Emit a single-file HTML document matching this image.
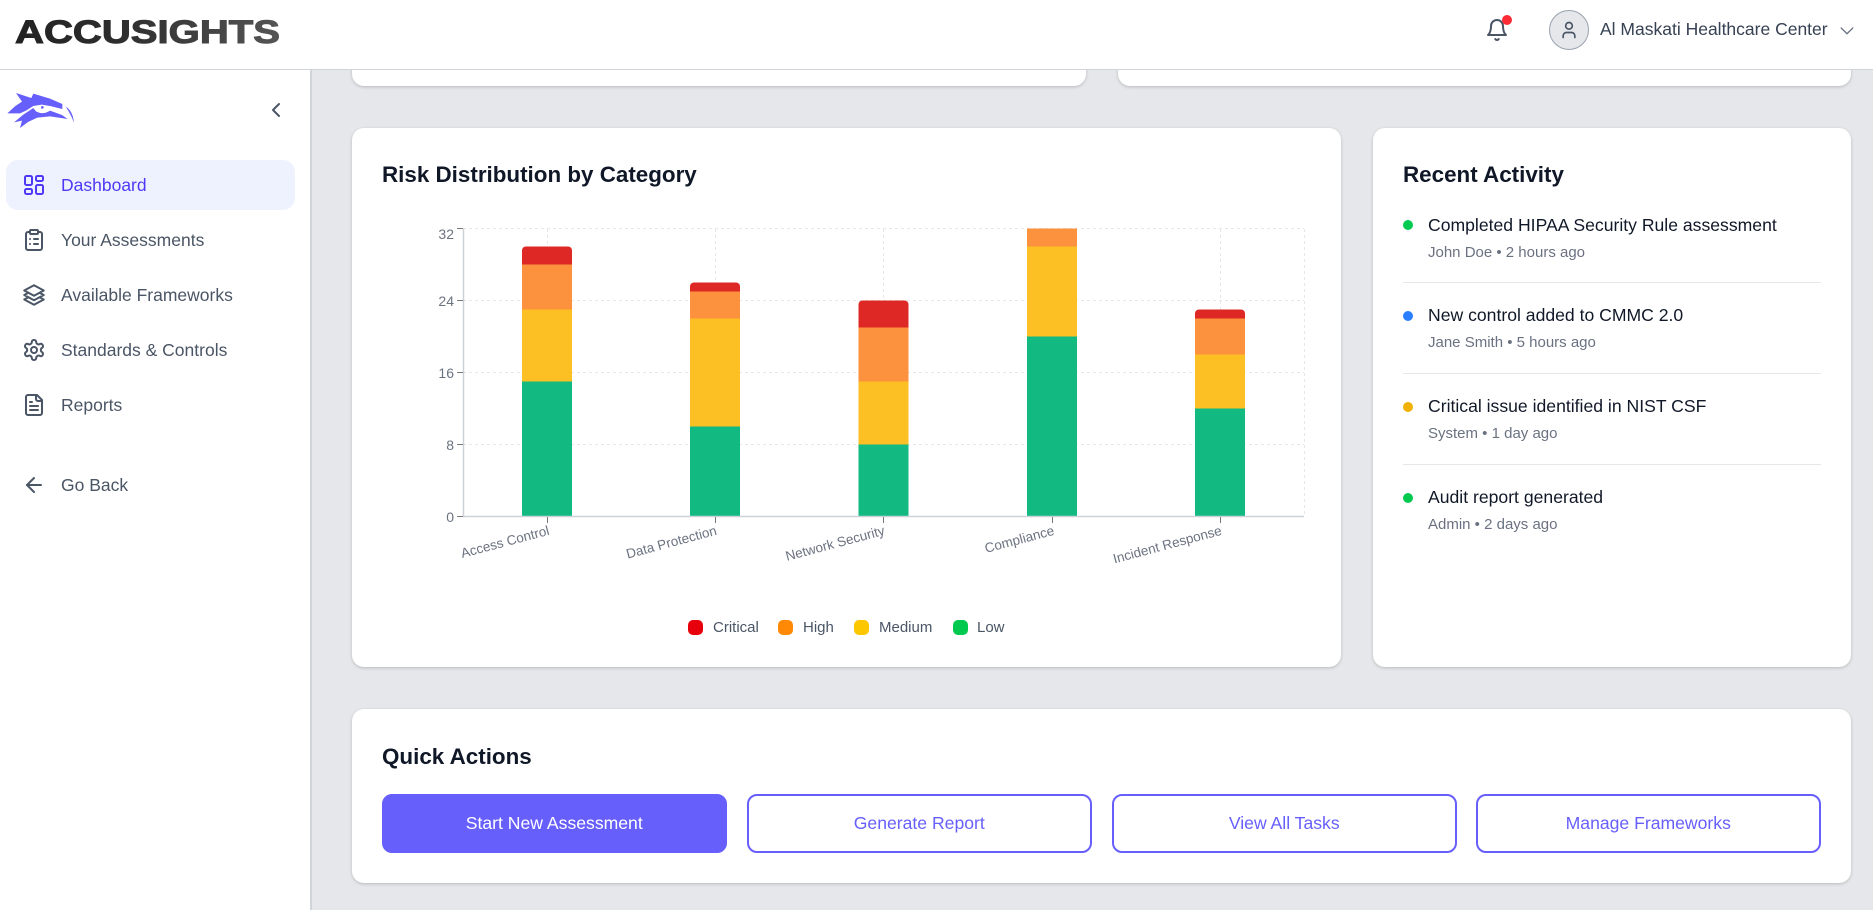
<!DOCTYPE html>
<html lang="en">
<head>
<meta charset="utf-8">
<title>AccuSights Dashboard</title>
<style>
html,body{margin:0;padding:0;width:1873px;height:910px;overflow:hidden;background:#e5e7eb;font-family:"Liberation Sans",Arial,sans-serif}
*{box-sizing:border-box}
.abs,.t{position:absolute}
.t{white-space:nowrap}
.card{position:absolute;background:#fff;border-radius:12px;box-shadow:0 1px 3px rgba(0,0,0,.2)}
.nav{position:absolute;left:61px;font-size:17.500px;line-height:24px;color:#4a5565;white-space:nowrap}
.ic{position:absolute;left:21.5px;width:24px;height:24px;fill:none;stroke:#4a5565;stroke-width:2;stroke-linecap:round;stroke-linejoin:round}
h3{position:absolute;margin:0;font-size:22.4px;line-height:28px;font-weight:700;color:#101828;white-space:nowrap}
.dot{position:absolute;left:1403px;width:10px;height:10px;border-radius:50%}
.a1{position:absolute;left:1428px;font-size:17.6px;line-height:24px;color:#101828;white-space:nowrap}
.a2{position:absolute;left:1428px;font-size:15px;line-height:20px;color:#6a7282;white-space:nowrap}
.hr{position:absolute;left:1403px;width:418px;height:1px;background:#e5e7eb}
.btn{position:absolute;top:794px;width:344.5px;height:59px;border-radius:10px;border:2px solid #675ffb;color:#675ffb;font-size:17.6px;line-height:55px;text-align:center;background:#fff;white-space:nowrap}
.btn.p{background:#675ffb;color:#fff}
.leg{position:absolute;top:620px;width:15px;height:15px;border-radius:5px}
.lt{position:absolute;top:618px;font-size:15px;line-height:20px;color:#4a5565;white-space:nowrap}
</style>
</head>
<body>

<!-- Main cards -->
<div class="card" style="left:352px;top:40px;width:734px;height:46px"></div>
<div class="card" style="left:1118px;top:40px;width:733px;height:46px"></div>
<div class="card" style="left:352px;top:128px;width:989px;height:539px"></div>
<div class="card" style="left:1373px;top:128px;width:478px;height:539px"></div>
<div class="card" style="left:352px;top:709px;width:1499px;height:174px"></div>

<!-- Chart -->
<svg class="abs" style="left:0;top:0" width="1873" height="910" viewBox="0 0 1873 910">
  <g stroke="#e5e7eb" stroke-width="1" stroke-dasharray="3 3" fill="none" shape-rendering="crispEdges">
    <path d="M463 228.500H1304M463 300.500H1304M463 372.500H1304M463 444.500H1304"/>
    <path d="M547.500 229V516M715.500 229V516M883.500 229V516M1052.500 229V516M1220.500 229V516M1304.500 229V516"/>
  </g>
  <g transform="translate(0,-0.500)">
  <!-- Access Control -->
  <rect x="522" y="382" width="50" height="135" fill="#12ba81"/>
  <rect x="522" y="310" width="50" height="72" fill="#fcbf24"/>
  <rect x="522" y="265" width="50" height="45" fill="#fd923e"/>
  <path d="M522 265V251a4 4 0 0 1 4-4h42a4 4 0 0 1 4 4v14Z" fill="#dd2825"/>
  <!-- Data Protection -->
  <rect x="690" y="427" width="50" height="90" fill="#12ba81"/>
  <rect x="690" y="319" width="50" height="108" fill="#fcbf24"/>
  <rect x="690" y="292" width="50" height="27" fill="#fd923e"/>
  <path d="M690 292V287a4 4 0 0 1 4-4h42a4 4 0 0 1 4 4v5Z" fill="#dd2825"/>
  <!-- Network Security -->
  <rect x="858.500" y="445" width="50" height="72" fill="#12ba81"/>
  <rect x="858.500" y="382" width="50" height="63" fill="#fcbf24"/>
  <rect x="858.500" y="328" width="50" height="54" fill="#fd923e"/>
  <path d="M858.500 328V305a4 4 0 0 1 4-4h42a4 4 0 0 1 4 4v23Z" fill="#dd2825"/>
  <!-- Compliance -->
  <rect x="1027" y="337" width="50" height="180" fill="#12ba81"/>
  <rect x="1027" y="247" width="50" height="90" fill="#fcbf24"/>
  <rect x="1027" y="229" width="50" height="18" fill="#fd923e"/>
  <!-- Incident Response -->
  <rect x="1195" y="409" width="50" height="108" fill="#12ba81"/>
  <rect x="1195" y="355" width="50" height="54" fill="#fcbf24"/>
  <rect x="1195" y="319" width="50" height="36" fill="#fd923e"/>
  <path d="M1195 319V314a4 4 0 0 1 4-4h42a4 4 0 0 1 4 4v5Z" fill="#dd2825"/>
  </g>

  <!-- Axes -->
  <path d="M463.500 229V516.500H1304" fill="none" stroke="#ccd1d9" stroke-width="1.500"/>
  <g shape-rendering="crispEdges">
    <path d="M457 228.500H463M457 300.500H463M457 372.500H463M457 444.500H463M457 516.500H463" stroke="#777" stroke-width="1"/>
    <path d="M547.500 517V523M715.500 517V523M883.500 517V523M1052.500 517V523M1220.500 517V523" stroke="#777" stroke-width="1"/>
  </g>
  <g font-family="'Liberation Sans',Arial,sans-serif" font-size="14" fill="#6b7280">
    <text x="454" y="239" text-anchor="end">32</text>
    <text x="454" y="306" text-anchor="end">24</text>
    <text x="454" y="378" text-anchor="end">16</text>
    <text x="454" y="450" text-anchor="end">8</text>
    <text x="454" y="522" text-anchor="end">0</text>
  </g>
  <g font-family="'Liberation Sans',Arial,sans-serif" font-size="13.500" fill="#6b7280">
    <text transform="translate(550 534.500) rotate(-15)" text-anchor="end">Access Control</text>
    <text transform="translate(717.500 534.500) rotate(-15)" text-anchor="end">Data Protection</text>
    <text transform="translate(885.500 534.500) rotate(-15)" text-anchor="end">Network Security</text>
    <text transform="translate(1055 534.500) rotate(-15)" text-anchor="end">Compliance</text>
    <text transform="translate(1222.500 534.500) rotate(-15)" text-anchor="end">Incident Response</text>
  </g>
</svg>

<h3 style="left:382px;top:161px">Risk Distribution by Category</h3>
<div class="leg" style="left:688px;background:#e7000b"></div><div class="lt" style="left:713px">Critical</div>
<div class="leg" style="left:778px;background:#ff8904"></div><div class="lt" style="left:803px">High</div>
<div class="leg" style="left:854px;background:#fdc700"></div><div class="lt" style="left:879px">Medium</div>
<div class="leg" style="left:953px;background:#00c950"></div><div class="lt" style="left:977px">Low</div>

<!-- Recent activity -->
<h3 style="left:1403px;top:161px">Recent Activity</h3>
<div class="dot" style="top:220px;background:#00c950"></div>
<div class="a1" style="top:213px">Completed HIPAA Security Rule assessment</div>
<div class="a2" style="top:243px">John Doe • 2 hours ago</div>
<div class="hr" style="top:282px"></div>
<div class="dot" style="top:311px;background:#2b7fff"></div>
<div class="a1" style="top:303px">New control added to CMMC 2.0</div>
<div class="a2" style="top:333px">Jane Smith • 5 hours ago</div>
<div class="hr" style="top:373px"></div>
<div class="dot" style="top:402px;background:#f0b100"></div>
<div class="a1" style="top:394px">Critical issue identified in NIST CSF</div>
<div class="a2" style="top:424px">System • 1 day ago</div>
<div class="hr" style="top:464px"></div>
<div class="dot" style="top:493px;background:#00c950"></div>
<div class="a1" style="top:485px">Audit report generated</div>
<div class="a2" style="top:515px">Admin • 2 days ago</div>

<!-- Quick actions -->
<h3 style="left:382px;top:743px">Quick Actions</h3>
<div class="btn p" style="left:382px">Start New Assessment</div>
<div class="btn" style="left:747px">Generate Report</div>
<div class="btn" style="left:1112px">View All Tasks</div>
<div class="btn" style="left:1476px">Manage Frameworks</div>

<!-- Sidebar -->
<div class="abs" style="left:0;top:69px;width:312px;height:841px;background:#fff;border-right:2px solid #d1d5db"></div>
<svg class="abs" style="left:0;top:0" width="80" height="135" viewBox="0 0 240 405">
  <g fill="#675ffb">
    <path d="M48 279L94 294L100 281L150 296L187 312L187 327L150 318L125 314L100 318L78 332L60 340L22 340L46 318L66 305Z"/>
    <path d="M100 324L108 334Q130 346 150 332L186 345L203 357L150 349L112 353L84 366L60 384L66 362L42 367L70 344Z"/>
    <path d="M197 320Q218 332 222 368Q212 342 197 320Z"/>
    <ellipse cx="128" cy="324" rx="12" ry="5" fill="#fff"/>
    <circle cx="127" cy="322" r="4"/>
  </g>
</svg>
<svg class="ic" style="left:264px;top:98px;stroke-width:2" viewBox="0 0 24 24"><path d="m15 18-6-6 6-6"/></svg>

<div class="abs" style="left:6px;top:160px;width:289px;height:50px;border-radius:12px;background:#eef2ff"></div>
<svg class="ic" style="top:173px;stroke:#4f39f6" viewBox="0 0 24 24"><rect x="3" y="3" width="7" height="9" rx="1.500"/><rect x="14" y="3" width="7" height="5" rx="1.500"/><rect x="14" y="12" width="7" height="9" rx="1.500"/><rect x="3" y="16" width="7" height="5" rx="1.500"/></svg>
<div class="nav" style="top:173px;color:#4f39f6">Dashboard</div>

<svg class="ic" style="top:228px" viewBox="0 0 24 24"><rect x="8" y="2" width="8" height="4" rx="1"/><path d="M16 4h2a2 2 0 0 1 2 2v14a2 2 0 0 1-2 2H6a2 2 0 0 1-2-2V6a2 2 0 0 1 2-2h2"/><path d="M12 11h4"/><path d="M12 16h4"/><path d="M8 11h.01"/><path d="M8 16h.01"/></svg>
<div class="nav" style="top:228px">Your Assessments</div>

<svg class="ic" style="top:283px" viewBox="0 0 24 24"><path d="M6.429 9.750 2.250 12l4.179 2.250m0-4.500 5.571 3 5.571-3m-11.142 0L2.250 7.500 12 2.250l9.750 5.250-4.179 2.250m0 0L21.750 12l-4.179 2.250m0 0 4.179 2.250L12 21.750 2.250 16.500l4.179-2.250m11.142 0-5.571 3-5.571-3"/></svg>
<div class="nav" style="top:283px">Available Frameworks</div>

<svg class="ic" style="top:338px" viewBox="0 0 24 24"><path d="M12.220 2h-.44a2 2 0 0 0-2 2v.18a2 2 0 0 1-1 1.730l-.43.25a2 2 0 0 1-2 0l-.15-.08a2 2 0 0 0-2.730.73l-.22.38a2 2 0 0 0 .73 2.730l.15.1a2 2 0 0 1 1 1.720v.51a2 2 0 0 1-1 1.740l-.15.09a2 2 0 0 0-.73 2.730l.22.38a2 2 0 0 0 2.730.73l.15-.08a2 2 0 0 1 2 0l.43.25a2 2 0 0 1 1 1.730V20a2 2 0 0 0 2 2h.44a2 2 0 0 0 2-2v-.18a2 2 0 0 1 1-1.730l.43-.25a2 2 0 0 1 2 0l.15.08a2 2 0 0 0 2.730-.73l.22-.39a2 2 0 0 0-.73-2.730l-.15-.08a2 2 0 0 1-1-1.740v-.5a2 2 0 0 1 1-1.740l.15-.09a2 2 0 0 0 .73-2.730l-.22-.38a2 2 0 0 0-2.730-.73l-.15.08a2 2 0 0 1-2 0l-.43-.25a2 2 0 0 1-1-1.730V4a2 2 0 0 0-2-2z"/><circle cx="12" cy="12" r="3"/></svg>
<div class="nav" style="top:338px">Standards &amp; Controls</div>

<svg class="ic" style="top:393px" viewBox="0 0 24 24"><path d="M15 2H6a2 2 0 0 0-2 2v16a2 2 0 0 0 2 2h12a2 2 0 0 0 2-2V7Z"/><path d="M14 2v4a2 2 0 0 0 2 2h4"/><path d="M10 9H8"/><path d="M16 13H8"/><path d="M16 17H8"/></svg>
<div class="nav" style="top:393px">Reports</div>

<svg class="ic" style="top:473px" viewBox="0 0 24 24"><path d="m12 19-7-7 7-7"/><path d="M19 12H5"/></svg>
<div class="nav" style="top:473px">Go Back</div>

<!-- Header -->
<div class="abs" style="left:0;top:0;width:1873px;height:70px;background:#fff;border-bottom:1px solid #d1d5db"></div>
<svg class="abs" style="left:0;top:0" width="300" height="60" viewBox="0 0 300 60">
  <defs><linearGradient id="lg" x1="0" x2="1" y1="0" y2="0"><stop offset="0" stop-color="#222"/><stop offset=".4" stop-color="#2e2e2e"/><stop offset="1" stop-color="#555"/></linearGradient></defs>
  <text x="15" y="43" font-family="'Liberation Sans',Arial,sans-serif" font-weight="700" font-size="32" textLength="265" lengthAdjust="spacingAndGlyphs" fill="url(#lg)" stroke="url(#lg)" stroke-width="1">ACCUSIGHTS</text>
</svg>

<svg class="ic" style="left:1485px;top:18px" viewBox="0 0 24 24"><path d="M6 8a6 6 0 0 1 12 0c0 7 3 9 3 9H3s3-2 3-9"/><path d="M10.300 21a1.940 1.940 0 0 0 3.400 0"/></svg>
<div class="abs" style="left:1502px;top:15px;width:10px;height:10px;border-radius:50%;background:#fb2c36"></div>
<div class="abs" style="left:1549px;top:10px;width:40px;height:40px;border-radius:50%;background:#e5e7eb;border:1px solid #99a1af"></div>
<svg class="ic" style="left:1559px;top:20px;width:20px;height:20px" viewBox="0 0 24 24"><path d="M19 21v-2a4 4 0 0 0-4-4H9a4 4 0 0 0-4 4v2"/><circle cx="12" cy="7" r="4"/></svg>
<div class="t" style="left:1600px;top:17px;font-size:17.500px;line-height:24px;color:#364153">Al Maskati Healthcare Center</div>
<svg class="ic" style="left:1837px;top:20px;width:20px;height:20px;stroke:#6a7282;stroke-width:1.600" viewBox="0 0 24 24"><path d="m5 9.500 7 7 7-7"/></svg>

</body>
</html>
